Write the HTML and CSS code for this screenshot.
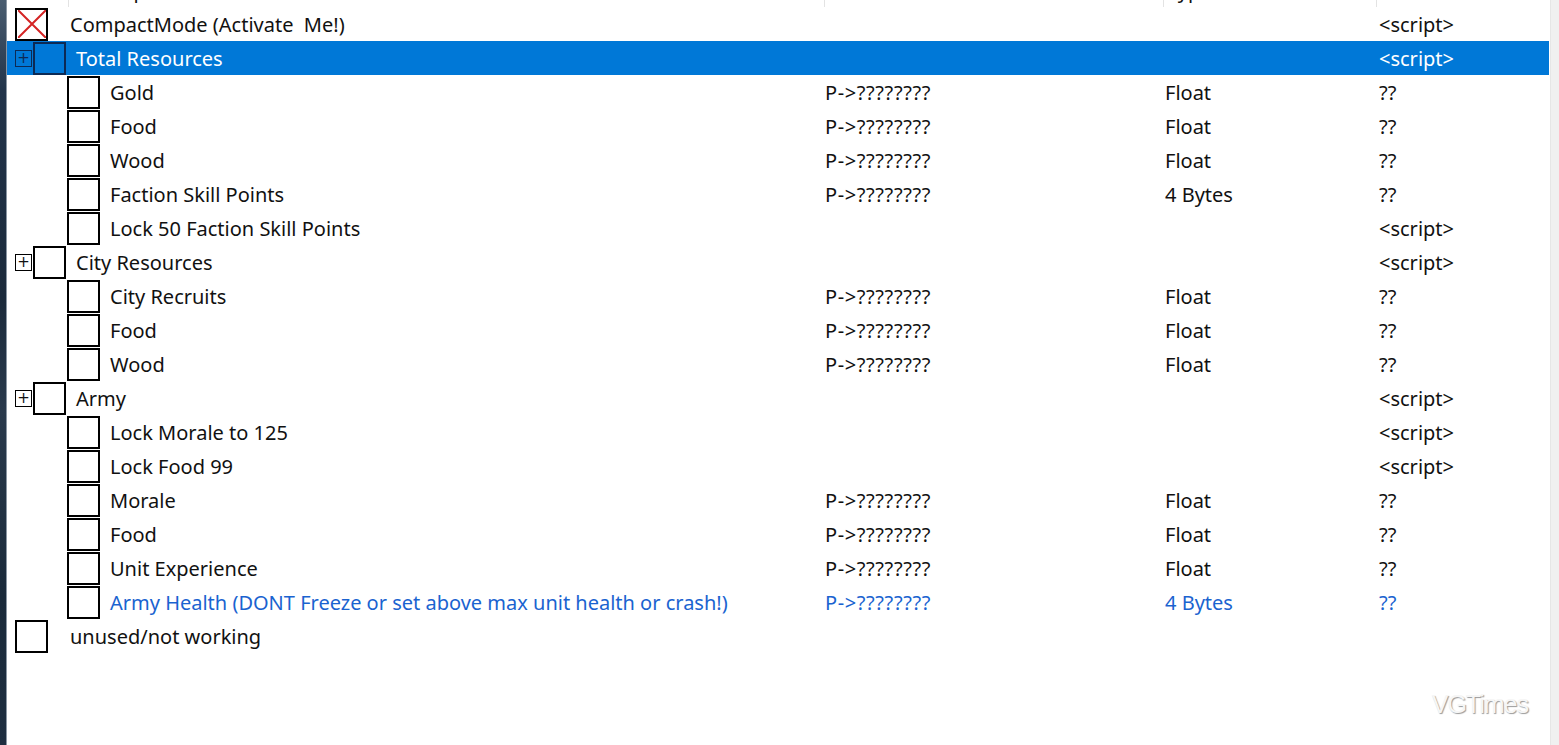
FILE: index.html
```html
<!DOCTYPE html>
<html lang="en">
<head>
  <meta charset="UTF-8">
  <title>Cheat Table</title>
  <link rel="stylesheet" href="styles.css">
</head>
<body>
  <div class="desk"></div>

  <main class="table">
    <div class="head">
      <div class="head-row">
        <span class="hc hc-active">Active</span>
        <span class="hc hc-desc">Description</span>
        <span class="hc hc-addr">Address</span>
        <span class="hc hc-type">Type</span>
        <span class="hc hc-val">Value</span>
      </div>
    </div>

    <div class="row top">
      <div class="tree">
        <span class="box checked">
          <svg viewBox="0 0 28 28" width="28" height="28"><path d="M0 0L28 28M28 0L0 28" stroke="#d42424" stroke-width="2"/></svg>
        </span>
        <span class="label">CompactMode (Activate&nbsp; Me!)</span>
      </div>
      <div class="addr"></div><div class="type"></div><div class="val">&lt;script&gt;</div>
    </div>

    <div class="row group selected">
      <div class="tree"><span class="exp">+</span><span class="box"></span><span class="label">Total Resources</span></div>
      <div class="addr"></div><div class="type"></div><div class="val">&lt;script&gt;</div>
    </div>
    <div class="row child">
      <div class="tree"><span class="box"></span><span class="label">Gold</span></div>
      <div class="addr">P-&gt;????????</div><div class="type">Float</div><div class="val">??</div>
    </div>
    <div class="row child">
      <div class="tree"><span class="box"></span><span class="label">Food</span></div>
      <div class="addr">P-&gt;????????</div><div class="type">Float</div><div class="val">??</div>
    </div>
    <div class="row child">
      <div class="tree"><span class="box"></span><span class="label">Wood</span></div>
      <div class="addr">P-&gt;????????</div><div class="type">Float</div><div class="val">??</div>
    </div>
    <div class="row child">
      <div class="tree"><span class="box"></span><span class="label">Faction Skill Points</span></div>
      <div class="addr">P-&gt;????????</div><div class="type">4 Bytes</div><div class="val">??</div>
    </div>
    <div class="row child">
      <div class="tree"><span class="box"></span><span class="label">Lock 50 Faction Skill Points</span></div>
      <div class="addr"></div><div class="type"></div><div class="val">&lt;script&gt;</div>
    </div>

    <div class="row group">
      <div class="tree"><span class="exp">+</span><span class="box"></span><span class="label">City Resources</span></div>
      <div class="addr"></div><div class="type"></div><div class="val">&lt;script&gt;</div>
    </div>
    <div class="row child">
      <div class="tree"><span class="box"></span><span class="label">City Recruits</span></div>
      <div class="addr">P-&gt;????????</div><div class="type">Float</div><div class="val">??</div>
    </div>
    <div class="row child">
      <div class="tree"><span class="box"></span><span class="label">Food</span></div>
      <div class="addr">P-&gt;????????</div><div class="type">Float</div><div class="val">??</div>
    </div>
    <div class="row child">
      <div class="tree"><span class="box"></span><span class="label">Wood</span></div>
      <div class="addr">P-&gt;????????</div><div class="type">Float</div><div class="val">??</div>
    </div>

    <div class="row group">
      <div class="tree"><span class="exp">+</span><span class="box"></span><span class="label">Army</span></div>
      <div class="addr"></div><div class="type"></div><div class="val">&lt;script&gt;</div>
    </div>
    <div class="row child">
      <div class="tree"><span class="box"></span><span class="label">Lock Morale to 125</span></div>
      <div class="addr"></div><div class="type"></div><div class="val">&lt;script&gt;</div>
    </div>
    <div class="row child">
      <div class="tree"><span class="box"></span><span class="label">Lock Food 99</span></div>
      <div class="addr"></div><div class="type"></div><div class="val">&lt;script&gt;</div>
    </div>
    <div class="row child">
      <div class="tree"><span class="box"></span><span class="label">Morale</span></div>
      <div class="addr">P-&gt;????????</div><div class="type">Float</div><div class="val">??</div>
    </div>
    <div class="row child">
      <div class="tree"><span class="box"></span><span class="label">Food</span></div>
      <div class="addr">P-&gt;????????</div><div class="type">Float</div><div class="val">??</div>
    </div>
    <div class="row child">
      <div class="tree"><span class="box"></span><span class="label">Unit Experience</span></div>
      <div class="addr">P-&gt;????????</div><div class="type">Float</div><div class="val">??</div>
    </div>
    <div class="row child blue">
      <div class="tree"><span class="box"></span><span class="label">Army Health (DONT Freeze or set above max unit health or crash!)</span></div>
      <div class="addr">P-&gt;????????</div><div class="type">4 Bytes</div><div class="val">??</div>
    </div>

    <div class="row top">
      <div class="tree"><span class="box"></span><span class="label">unused/not working</span></div>
      <div class="addr"></div><div class="type"></div><div class="val"></div>
    </div>

    <div class="watermark">VGTimes</div>
  </main>

  <div class="scroll"></div>
</body>
</html>
```

FILE: styles.css
```css
* {
  box-sizing: border-box;
}
html, body {
  height: 100%;
}
body {
  margin: 0;
  display: flex;
  font-family: 'Noto Sans', sans-serif;
  font-size: 20px;
  color: #111;
  background: #fff;
  overflow: hidden;
}

.desk {
  width: 7px;
  flex: none;
  background: linear-gradient(to bottom, #4a5d70 0%, #22344a 12%, #1b2a3b 40%, #2a3a4c 55%, #1a2a3a 80%, #1e2e40 100%);
  border-right: 1px solid #8a96a3;
}
.scroll {
  width: 9px;
  flex: none;
  background: #f0f0f0;
  border-left: 1px solid #e6e6e6;
}

.table {
  flex: 1;
  position: relative;
}

/* column header, scrolled mostly out of view */
.head {
  height: 7px;
  overflow: hidden;
}
.head-row {
  display: flex;
  height: 30px;
  margin-top: -23px;
}
.hc {
  height: 30px;
  line-height: 28px;
  padding-left: 6px;
  border-right: 1px solid #e3e3e3;
  white-space: nowrap;
  overflow: hidden;
}
.hc-active { width: 62px; color: transparent; }
.hc-desc { width: 756px; }
.hc-addr { width: 339px; }
.hc-type { width: 213px; padding-left: 3px; }
.hc-val { flex: 1; border-right: none; }

.row {
  display: flex;
  align-items: center;
  height: 34px;
  white-space: nowrap;
}
.row.selected {
  background: #0078d7;
  color: #fff;
  margin-right: 1px;
}
.row.blue {
  color: #1a63d0;
}

.tree {
  width: 818px;
  display: flex;
  align-items: center;
  padding-left: 8px;
}
.child .tree {
  padding-left: 60px;
}

.box {
  width: 33px;
  height: 33px;
  border: 2px solid #000;
  flex: none;
  display: flex;
  align-items: center;
  justify-content: center;
}
.group .box {
  margin-left: 1px;
}
.selected .box {
  border-color: #0c2a55;
}

.exp {
  width: 17px;
  height: 17px;
  border: 1px solid #000;
  flex: none;
  font-family: 'DejaVu Sans', sans-serif;
  font-size: 15px;
  line-height: 14px;
  text-align: center;
}
.selected .exp {
  border-color: #0c2a55;
  color: #0c2a55;
}

.label {
  margin-left: 10px;
}
.top .label {
  margin-left: 22px;
}

.addr {
  width: 340px;
  letter-spacing: 0.6px;
}
.type {
  width: 214px;
}
.val {
  flex: 1;
}

.watermark {
  position: absolute;
  right: 22px;
  bottom: 26px;
  font-family: 'Liberation Sans', sans-serif;
  font-size: 25px;
  letter-spacing: -1px;
  color: #f6f6f6;
  text-shadow: 1px 1px 1px #9a9a9a, -1px -1px 0 #fff;
}
```
